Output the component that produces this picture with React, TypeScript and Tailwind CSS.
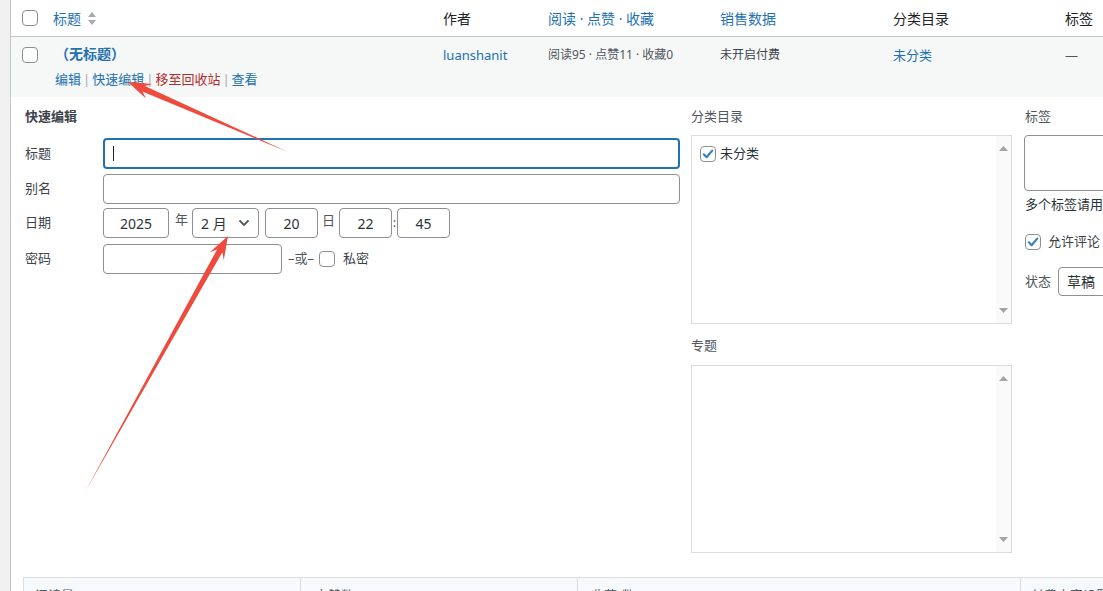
import React from "react";

function arrowPoints(tx: number, ty: number, px: number, py: number) {
  const dx = px - tx;
  const dy = py - ty;
  const len = Math.sqrt(dx * dx + dy * dy);
  const ux = dx / len;
  const uy = dy / len;
  const nx = -uy;
  const ny = ux;
  const neckL = 17;
  const barbL = 23;
  const w = 3;
  const W = 8;
  const nk = [px - ux * neckL, py - uy * neckL];
  const bb = [px - ux * barbL, py - uy * barbL];
  const pts = [
    [tx, ty],
    [nk[0] + nx * w, nk[1] + ny * w],
    [bb[0] + nx * W, bb[1] + ny * W],
    [px, py],
    [bb[0] - nx * W, bb[1] - ny * W],
    [nk[0] - nx * w, nk[1] - ny * w],
  ];
  return pts.map((p) => `${p[0].toFixed(1)},${p[1].toFixed(1)}`).join(" ");
}

function Checkbox({ checked = false }: { checked?: boolean }) {
  return (
    <span className="flex h-4 w-4 flex-none items-center justify-center rounded-[4px] border border-[#8c8f94] bg-white">
      {checked && (
        <svg width="14" height="14" viewBox="0 0 14 14">
          <path d="M2.8 7.3 L5.6 10.2 L11.2 3.6" fill="none" stroke="#3582c4" strokeWidth="2.2" strokeLinecap="round" strokeLinejoin="round" />
        </svg>
      )}
    </span>
  );
}

function ScrollBox({ children, h }: { children?: React.ReactNode; h: string }) {
  return (
    <div className={`flex w-[321px] border border-[#dcdcde] bg-white ${h}`}>
      <div className="flex-1 pl-[8px] pt-[8px]">{children}</div>
      <div className="flex w-[15px] flex-col items-center justify-between bg-[#fafafa] pb-[10px] pt-[10px]">
        <svg width="9" height="5" viewBox="0 0 9 5"><path d="M0 5 L4.5 0 L9 5 Z" fill="#a3a3a3" /></svg>
        <svg width="9" height="5" viewBox="0 0 9 5"><path d="M0 0 L4.5 5 L9 0 Z" fill="#a3a3a3" /></svg>
      </div>
    </div>
  );
}

const inputCls = "flex h-[30px] flex-none items-center rounded-[4px] border border-[#8c8f94] bg-white text-[14px] text-[#2c3338]";

export default function App() {
  return (
    <div className="relative h-[591px] w-[1103px] overflow-hidden bg-[#f0f0f1] font-['Noto_Sans','Noto_Sans_CJK_SC',sans-serif] text-[13px] text-[#1d2327]">
      <div className="ml-[10px] h-full w-[1200px] border-l border-[#c3c4c7] bg-white">
        {/* Header */}
        <div className="flex h-[37px] items-center border-b border-[#c3c4c7] text-[14px]">
          <div className="flex w-[34px] flex-none pl-[11px]"><Checkbox /></div>
          <div className="flex w-[390px] flex-none items-center pl-2 text-[#2271b1]">
            <span>标题</span>
            <svg className="ml-[6px]" width="10" height="15" viewBox="0 0 10 15">
              <path d="M1 6 L5 1 L9 6 Z" fill="#a7aaad" />
              <path d="M1 9 L5 14 L9 9 Z" fill="#a7aaad" />
            </svg>
          </div>
          <div className="w-[105px] flex-none pl-2">作者</div>
          <div className="w-[172px] flex-none pl-2 text-[#2271b1]">阅读 · 点赞 · 收藏</div>
          <div className="w-[173px] flex-none pl-2 text-[#2271b1]">销售数据</div>
          <div className="w-[172px] flex-none pl-2">分类目录</div>
          <div className="w-[60px] flex-none pl-2">标签</div>
        </div>

        {/* Data row */}
        <div className="flex h-[60px] bg-[#f6f7f7]">
          <div className="w-[34px] flex-none pl-[11px] pt-[10px]"><Checkbox /></div>
          <div className="w-[390px] flex-none pl-[10px] pt-[7px]">
            <div className="h-[20px] text-[14px] font-bold leading-[20px] text-[#2271b1]">（无标题）</div>
            <div className="mt-[5px] flex h-[20px] items-center leading-[20px]">
              <span className="text-[#2271b1]">编辑</span>
              <span className="px-[2px] text-[#a7aaad]">|</span>
              <span className="text-[#2271b1]">快速编辑</span>
              <span className="px-[2px] text-[#a7aaad]">|</span>
              <span className="text-[#b32d2e]">移至回收站</span>
              <span className="px-[2px] text-[#a7aaad]">|</span>
              <span className="text-[#2271b1]">查看</span>
            </div>
          </div>
          <div className="w-[105px] flex-none pl-2 pt-[8px] leading-[20px] text-[#2271b1]">luanshanit</div>
          <div className="w-[172px] flex-none pl-2 pt-[8px] text-[12px] leading-[20px] text-[#50575e]">阅读95 · 点赞11 · 收藏0</div>
          <div className="w-[173px] flex-none pl-2 pt-[8px] text-[12px] leading-[20px] text-[#3c434a]">未开启付费</div>
          <div className="w-[172px] flex-none pl-2 pt-[8px] leading-[20px] text-[#2271b1]">未分类</div>
          <div className="w-[60px] flex-none pl-2 pt-[8px] leading-[20px] text-[#50575e]">—</div>
        </div>

        {/* Quick edit */}
        <div className="flex pt-[9px]">
          {/* Left */}
          <div className="w-[669px] flex-none pl-[14px]">
            <div className="h-[20px] font-bold leading-[20px] text-[#3c434a]">快速编辑</div>
            <div className="mt-[12px] flex items-center">
              <span className="w-[78px] flex-none text-[#3c434a]">标题</span>
              <div className="flex h-[31px] w-[577px] flex-none items-center rounded-[4px] border-2 border-[#2271b1] bg-white pl-[8px]">
                <span className="h-[15px] w-px bg-[#1d2327]" />
              </div>
            </div>
            <div className="mt-[5px] flex items-center">
              <span className="w-[78px] flex-none text-[#3c434a]">别名</span>
              <div className={`${inputCls} w-[577px]`} />
            </div>
            <div className="mt-[4px] flex items-center">
              <span className="w-[78px] flex-none text-[#3c434a]">日期</span>
              <div className={`${inputCls} w-[66px] justify-center`}>2025</div>
              <span className="ml-[6px] mr-[4px] -mt-[6px] text-[#50575e]">年</span>
              <div className={`${inputCls} w-[67px] justify-between pl-[8px] pr-[8px]`}>
                <span>2 月</span>
                <svg width="12" height="8" viewBox="0 0 12 8"><path d="M1.5 1.5 L6 6 L10.5 1.5" fill="none" stroke="#50575e" strokeWidth="1.8" /></svg>
              </div>
              <div className={`${inputCls} ml-[6px] w-[53px] justify-center`}>20</div>
              <span className="ml-[4px] mr-[4px] -mt-[4px] text-[#50575e]">日</span>
              <div className={`${inputCls} w-[53px] justify-center`}>22</div>
              <span className="w-[5px] text-center text-[#50575e]">:</span>
              <div className={`${inputCls} w-[53px] justify-center`}>45</div>
            </div>
            <div className="mt-[6px] flex items-center">
              <span className="w-[78px] flex-none text-[#3c434a]">密码</span>
              <div className={`${inputCls} w-[179px]`} />
              <span className="ml-[6px] text-[#50575e]">–或–</span>
              <span className="ml-[5px]"><Checkbox /></span>
              <span className="ml-[8px] text-[#3c434a]">私密</span>
            </div>
          </div>

          {/* Middle */}
          <div className="ml-[11px] w-[321px] flex-none">
            <div className="h-[20px] leading-[20px] text-[#50575e]">分类目录</div>
            <div className="mt-[9px]">
              <ScrollBox h="h-[189px]">
                <div className="flex items-center">
                  <Checkbox checked />
                  <span className="ml-[4px] text-[#2c3338]">未分类</span>
                </div>
              </ScrollBox>
            </div>
            <div className="mt-[11px] h-[20px] leading-[20px] text-[#50575e]">专题</div>
            <div className="mt-[10px]">
              <ScrollBox h="h-[188px]" />
            </div>
          </div>

          {/* Right */}
          <div className="ml-[12px] w-[200px] flex-none">
            <div className="h-[20px] pl-px leading-[20px] text-[#50575e]">标签</div>
            <div className="mt-[9px] h-[56px] w-[180px] rounded-[4px] border border-[#8c8f94] bg-white" />
            <div className="mt-[3px] h-[20px] whitespace-nowrap pl-px leading-[20px] text-[#2c3338]">多个标签请用英文逗号（,）分开。</div>
            <div className="mt-[18px] flex h-[20px] items-center pl-px">
              <Checkbox checked />
              <span className="ml-[7px] text-[#3c434a]">允许评论</span>
            </div>
            <div className="mt-[15px] flex items-center pl-px">
              <span className="w-[33px] flex-none text-[#50575e]">状态</span>
              <div className="flex h-[29px] w-[120px] items-center rounded-[4px] border border-[#8c8f94] bg-white pl-[8px] text-[14px] text-[#2c3338]">草稿</div>
            </div>
          </div>
        </div>

        {/* Bottom row */}
        <div className="ml-[12px] mt-[24px] flex h-[40px] border-t border-l border-[#dcdcde] bg-[#f6fafd] text-[13px] text-[#50575e]">
          <div className="w-[277px] flex-none border-r border-[#dcdcde] pl-[11px] pt-[8px]">阅读量</div>
          <div className="w-[277px] flex-none border-r border-[#dcdcde] pl-[14px] pt-[8px]">点赞数</div>
          <div className="w-[443px] flex-none border-r border-[#dcdcde] pl-[13px] pt-[8px]">收藏/数</div>
          <div className="flex-none pl-[10px] pt-[8px]">付费内容设置</div>
        </div>
      </div>

      {/* Annotation arrows */}
      <svg className="pointer-events-none absolute left-0 top-0" width="1103" height="591">
        <polygon points={arrowPoints(288, 152, 128, 82)} fill="#ee4a3e" />
        <polygon points={arrowPoints(85, 492, 228, 236)} fill="#ee4a3e" />
      </svg>
    </div>
  );
}
